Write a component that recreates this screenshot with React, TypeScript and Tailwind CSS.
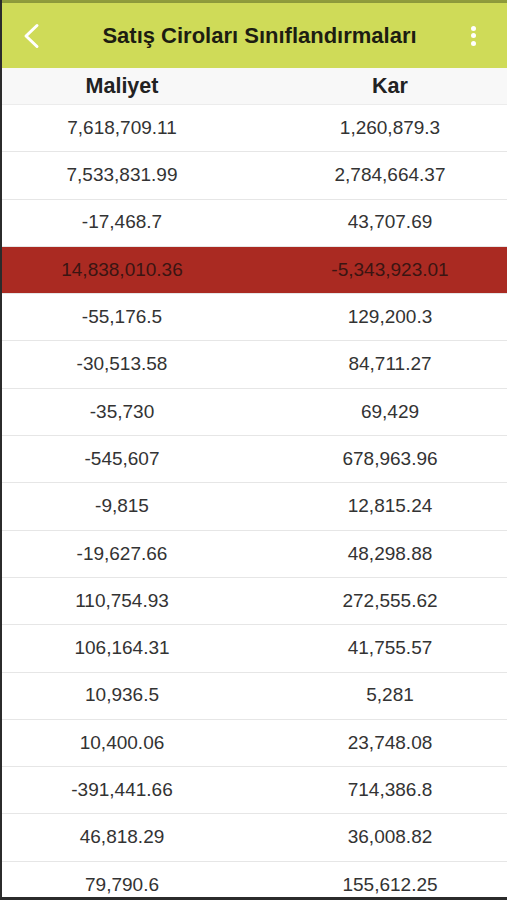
const rows: [string, string][] = [
  ["7,618,709.11", "1,260,879.3"],
  ["7,533,831.99", "2,784,664.37"],
  ["-17,468.7", "43,707.69"],
  ["14,838,010.36", "-5,343,923.01"],
  ["-55,176.5", "129,200.3"],
  ["-30,513.58", "84,711.27"],
  ["-35,730", "69,429"],
  ["-545,607", "678,963.96"],
  ["-9,815", "12,815.24"],
  ["-19,627.66", "48,298.88"],
  ["110,754.93", "272,555.62"],
  ["106,164.31", "41,755.57"],
  ["10,936.5", "5,281"],
  ["10,400.06", "23,748.08"],
  ["-391,441.66", "714,386.8"],
  ["46,818.29", "36,008.82"],
  ["79,790.6", "155,612.25"],
]

const App = () => {
  return (
    <div className="w-[507px] h-[900px] overflow-hidden flex flex-col border-l-2 border-b-[3px] border-[#2b2b2b] bg-white font-['Liberation_Sans',Arial,sans-serif]">
      <div className="h-[3px] shrink-0 bg-[#8f9c3c]" />
      <div className="h-[65px] shrink-0 flex items-center bg-[#cfdb58] px-5 shadow-sm">
        <svg width="20" height="26" viewBox="0 0 20 26" fill="none">
          <path d="M15 2.5 L4 13 L15 23.5" stroke="white" strokeWidth="3" strokeLinecap="round" strokeLinejoin="round" />
        </svg>
        <h1 className="flex-1 text-center text-[22px] font-bold text-[#1d1d12] pl-4">
          Satış Ciroları Sınıflandırmaları
        </h1>
        <div className="flex flex-col gap-[2.5px] items-center w-6 mr-0.5">
          <span className="w-[5px] h-[5px] rounded-full bg-white" />
          <span className="w-[5px] h-[5px] rounded-full bg-white" />
          <span className="w-[5px] h-[5px] rounded-full bg-white" />
        </div>
      </div>
      <div className="h-[37px] shrink-0 flex items-center bg-[#f8f8f8] border-b border-[#ececec] text-[21.5px] font-bold text-[#222]">
        <div className="w-[240px] shrink-0 text-center">Maliyet</div>
        <div className="w-[296px] shrink-0 text-center">Kar</div>
      </div>
      {rows.map(([a, b], i) => (
        <div
          key={i}
          className={`h-[47.3px] shrink-0 flex items-center border-b border-[#e6e6e6] text-[19px] ${
            i === 3 ? "bg-[#aa2a22] text-[#3a1512]" : "text-[#333]"
          }`}
        >
          <div className="w-[240px] shrink-0 text-center">{a}</div>
          <div className="w-[296px] shrink-0 text-center">{b}</div>
        </div>
      ))}
    </div>
  )
}

export default App
